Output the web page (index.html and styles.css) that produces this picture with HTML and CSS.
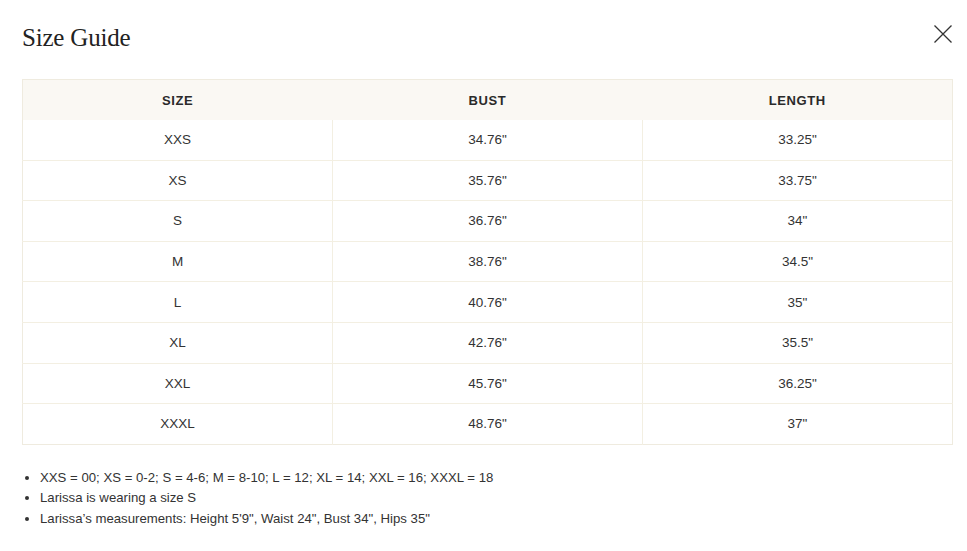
FILE: index.html
```html
<!DOCTYPE html>
<html>
<head>
<meta charset="utf-8">
<link rel="stylesheet" href="styles.css">
</head>
<body>
<div class="modal">
  <div class="head">
    <h1 class="title">Size Guide</h1>
    <button class="close" aria-label="Close">
      <svg width="20" height="20" viewBox="0 0 20 20"><path d="M1.5 1.5 L18.5 18.5 M18.5 1.5 L1.5 18.5" stroke="#333" stroke-width="1.3" fill="none"/></svg>
    </button>
  </div>
  <table class="sizes">
    <thead>
      <tr><th>SIZE</th><th>BUST</th><th>LENGTH</th></tr>
    </thead>
    <tbody>
      <tr><td>XXS</td><td>34.76"</td><td>33.25"</td></tr>
      <tr><td>XS</td><td>35.76"</td><td>33.75"</td></tr>
      <tr><td>S</td><td>36.76"</td><td>34"</td></tr>
      <tr><td>M</td><td>38.76"</td><td>34.5"</td></tr>
      <tr><td>L</td><td>40.76"</td><td>35"</td></tr>
      <tr><td>XL</td><td>42.76"</td><td>35.5"</td></tr>
      <tr><td>XXL</td><td>45.76"</td><td>36.25"</td></tr>
      <tr><td>XXXL</td><td>48.76"</td><td>37"</td></tr>
    </tbody>
  </table>
  <ul class="notes">
    <li>XXS = 00; XS = 0-2; S = 4-6; M = 8-10; L = 12; XL = 14; XXL = 16; XXXL = 18</li>
    <li>Larissa is wearing a size S</li>
    <li>Larissa’s measurements: Height 5'9", Waist 24", Bust 34", Hips 35"</li>
  </ul>
</div>
</body>
</html>
```
FILE: styles.css
```css
html, body { margin: 0; padding: 0; background: #fff; }
body { font-family: "Liberation Sans", Arial, sans-serif; color: #2b2b2b; }
.modal { padding: 0 14px 0 22px; }
.head { display: flex; justify-content: space-between; align-items: flex-start; height: 79px; }
.title {
  margin: 0; padding-top: 23px;
  font-family: "Liberation Serif", "Times New Roman", serif;
  font-weight: normal; font-size: 25px; line-height: 30px; color: #222; letter-spacing: -0.2px;
}
.close { background: none; border: 0; padding: 0; margin: 24px 0 0 0; width: 20px; height: 20px; cursor: pointer; }
.close svg { display: block; }
.sizes {
  width: 931px; border-collapse: collapse; table-layout: fixed;
  border: 1px solid #efebdf; font-size: 13.5px;
}
.sizes th {
  background: #faf8f3; height: 40px; font-weight: 600; letter-spacing: 0.6px;
  font-size: 13px; color: #2a2a2a; padding: 0; text-align: center;
}
.sizes td {
  height: 39.6px; padding: 0; text-align: center; color: #333;
  border-top: 1px solid #f3efe2; border-left: 1px solid #f3efe2;
}
.sizes td:first-child { border-left: 0; }
.sizes tbody tr:first-child td { border-top: 0; }
.notes { margin: 23px 0 0 0; padding-left: 18px; font-size: 13.2px; line-height: 20.5px; color: #333; }
.notes li { padding-left: 0; }
```
